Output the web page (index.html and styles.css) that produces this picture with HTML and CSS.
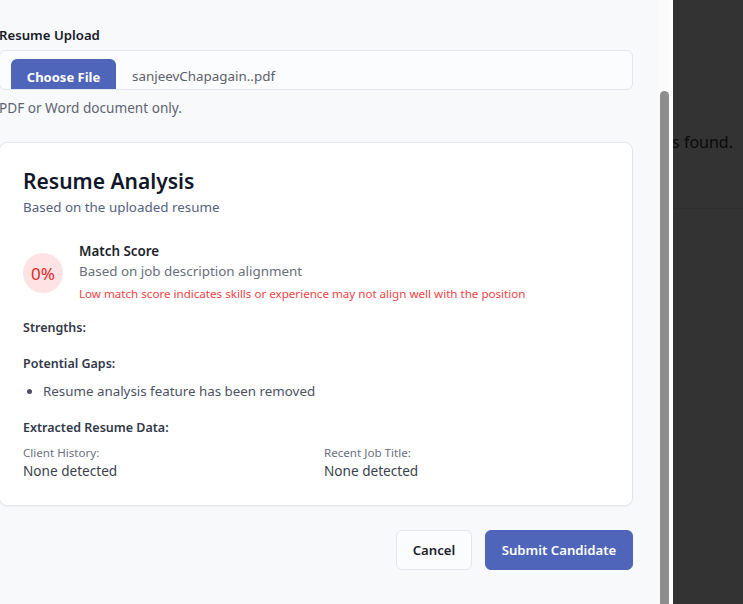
FILE: index.html
```html
<!DOCTYPE html>
<html>
<head>
<meta charset="utf-8">
<link rel="stylesheet" href="styles.css">
</head>
<body>
<div class="page">
  <div class="page-top">
    <p class="empty">No candidates found.</p>
  </div>
  <div class="page-rest"></div>
</div>
<div class="overlay"></div>
<div class="modal">
  <div class="modal-body">
    <div class="content">
      <label class="field-label">Resume Upload</label>
      <div class="file-box">
        <div class="file-btn">Choose File</div>
        <span class="file-name">sanjeevChapagain..pdf</span>
      </div>
      <p class="hint">PDF or Word document only.</p>

      <div class="card">
        <h2 class="card-title">Resume Analysis</h2>
        <p class="card-sub">Based on the uploaded resume</p>

        <div class="score-row">
          <div class="score-circle">0%</div>
          <div class="score-text">
            <div class="score-title">Match Score</div>
            <div class="score-desc">Based on job description alignment</div>
            <div class="score-warn">Low match score indicates skills or experience may not align well with the position</div>
          </div>
        </div>

        <div class="section-title first">Strengths:</div>
        <div class="section-title">Potential Gaps:</div>
        <ul class="gaps">
          <li>Resume analysis feature has been removed</li>
        </ul>
        <div class="section-title extracted">Extracted Resume Data:</div>
        <div class="data-grid">
          <div>
            <div class="data-label">Client History:</div>
            <div class="data-value">None detected</div>
          </div>
          <div>
            <div class="data-label">Recent Job Title:</div>
            <div class="data-value">None detected</div>
          </div>
        </div>
      </div>

      <div class="actions">
        <button class="btn btn-cancel">Cancel</button>
        <button class="btn btn-submit">Submit Candidate</button>
      </div>
    </div>
  </div>
  <div class="scroll-gap"></div>
  <div class="scrollbar"><div class="thumb"></div></div>
  <div class="scroll-edge"></div>
</div>
</body>
</html>
```
FILE: styles.css
```css
* { box-sizing: border-box; }
html, body {
  margin: 0;
  padding: 0;
  width: 743px;
  height: 604px;
  overflow: hidden;
  font-family: "Noto Sans", "Open Sans", sans-serif;
}
.page {
  width: 743px;
  height: 604px;
  background: #ffffff;
}
.page-top {
  height: 209px;
  border-bottom: 1px solid #ececec;
  padding-top: 131px;
}
.empty {
  margin: 0;
  font-size: 16px;
  color: #333;
  text-align: right;
  padding-right: 10px;
}
.overlay {
  position: absolute;
  inset: 0;
  background: rgba(0, 0, 0, 0.8);
}
.modal {
  position: absolute;
  left: 0;
  top: 0;
  width: 673px;
  height: 604px;
  display: flex;
  background: #f8f9fb;
}
.modal-body {
  width: 657px;
  overflow: hidden;
}
.scroll-gap {
  width: 3px;
  background: #fbfbfc;
}
.scrollbar {
  width: 9px;
  background: #fbfbfc;
  padding-top: 91px;
}
.thumb {
  height: 520px;
  background: #8d8d8d;
  border-radius: 5px 5px 0 0;
}
.scroll-edge {
  width: 4px;
  background: #ffffff;
}
.content {
  margin-left: -1px;
  width: 634px;
  padding-top: 26px;
}
.field-label {
  display: block;
  font-size: 13.2px;
  font-weight: 600;
  color: #161a29;
  line-height: 18px;
}
.file-box {
  margin-top: 6px;
  height: 40px;
  border: 1px solid #e2e6ef;
  border-radius: 6px;
  background: #fbfcfd;
  display: flex;
  align-items: flex-start;
  overflow: hidden;
  padding-left: 11px;
}
.file-btn {
  margin-top: 8px;
  width: 105px;
  height: 40px;
  background: #4e65b9;
  color: #fff;
  border-radius: 6px 6px 0 0;
  font-size: 13px;
  font-weight: 700;
  text-align: center;
  line-height: 36px;
}
.file-name {
  margin-left: 16px;
  margin-top: 16px;
  font-size: 13.4px;
  color: #5b5f6b;
  line-height: 18px;
}
.hint {
  margin: 9px 0 0;
  font-size: 13.6px;
  color: #5f6472;
  line-height: 18px;
}
.card {
  margin-top: 25px;
  height: 364px;
  background: #ffffff;
  border: 1px solid #e2e6ef;
  border-radius: 8px;
  box-shadow: 0 1px 2px rgba(16, 24, 40, 0.04);
  padding: 24px 23px 0 23px;
}
.card-title {
  margin: 0;
  font-size: 21px;
  font-weight: 600;
  color: #111729;
  line-height: 28px;
}
.card-sub {
  margin: 3px 0 0;
  font-size: 13.4px;
  color: #56617e;
  line-height: 18px;
}
.score-row {
  margin-top: 26px;
  display: flex;
  gap: 16px;
}
.score-circle {
  margin-top: 11px;
  width: 40px;
  height: 40px;
  border-radius: 50%;
  background: #fde3e3;
  color: #dc2828;
  font-size: 17px;
  display: flex;
  align-items: center;
  justify-content: center;
  flex-shrink: 0;
}
.score-title {
  font-size: 13.4px;
  font-weight: 600;
  color: #1b1f2c;
  line-height: 18px;
}
.score-desc {
  margin-top: 2px;
  font-size: 13.4px;
  color: #6a6f7c;
  line-height: 18px;
}
.score-warn {
  margin-top: 7px;
  font-size: 11.6px;
  color: #ef4444;
  line-height: 14px;
}
.section-title {
  font-size: 12.5px;
  font-weight: 600;
  color: #323848;
  line-height: 18px;
  margin-top: 18px;
}
.section-title.first {
  margin-top: 18px;
}
.section-title.extracted {
  margin-top: 19px;
}
.gaps {
  margin: 9px 0 0;
  padding-left: 20px;
  font-size: 13.35px;
  color: #4b5262;
  line-height: 18px;
}
.gaps li::marker { color: #4b5262; }
.data-grid {
  margin-top: 9px;
  display: grid;
  grid-template-columns: 1fr 1fr;
  column-gap: 16px;
}
.data-label {
  font-size: 11.6px;
  color: #6b7080;
  line-height: 14px;
}
.data-value {
  margin-top: 2px;
  font-size: 13.6px;
  color: #3a3f4c;
  line-height: 18px;
}
.actions {
  margin-top: 24px;
  display: flex;
  justify-content: flex-end;
  gap: 13px;
}
.btn {
  height: 40px;
  border-radius: 6px;
  font-family: inherit;
  font-size: 13.2px;
  font-weight: 600;
  padding: 0;
  cursor: pointer;
}
.btn-cancel {
  width: 76px;
  background: #fbfcfd;
  border: 1px solid #e2e6ef;
  color: #1b1f2c;
}
.btn-submit {
  width: 148px;
  background: #4e65b9;
  border: 1px solid #4e65b9;
  color: #fff;
}
```
